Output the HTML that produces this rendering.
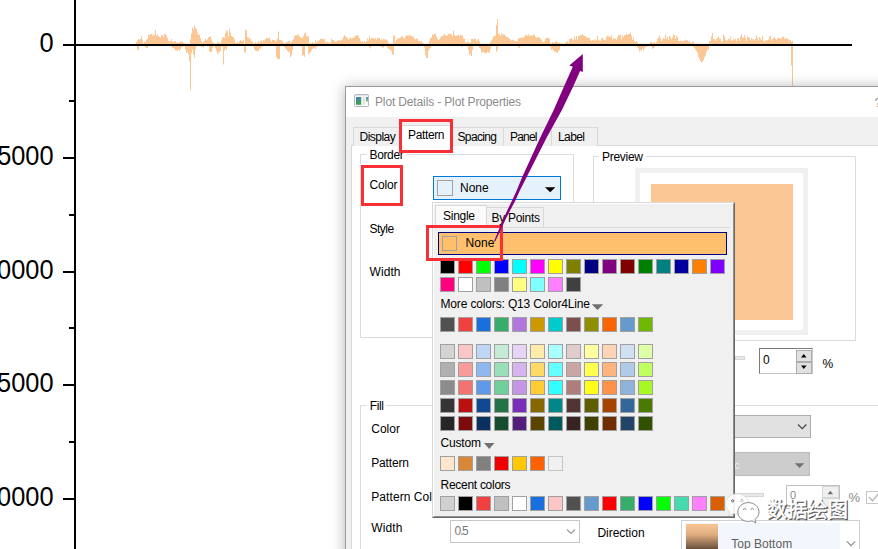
<!DOCTYPE html>
<html><head><meta charset="utf-8"><title>Plot Details - Plot Properties</title>
<style>
html,body{margin:0;padding:0;}
body{width:878px;height:549px;overflow:hidden;background:#fff;position:relative;font-family:"Liberation Sans","Noto Sans CJK SC",sans-serif;}
.b{position:absolute;box-sizing:border-box;}
.t{position:absolute;white-space:nowrap;line-height:1;}
.sw{position:absolute;box-sizing:border-box;width:15px;height:15px;border:1px solid #a0a0a0;}
svg{position:absolute;left:0;top:0;}
</style></head><body>

<svg width="878" height="549" viewBox="0 0 878 549">
<path d="M136.5 41.9V45.8M137.5 40.3V49.5M138.5 39.2V50.1M139.5 39.6V45.8M140.5 38.7V45.8M141.5 36.1V45.8M142.5 40.4V45.8M143.5 42.9V45.8M144.5 41.4V45.8M145.5 41.9V47.2M146.5 39.8V48.1M147.5 38.7V48.1M148.5 34.8V45.8M149.5 35.1V45.8M150.5 34.1V45.8M151.5 34.0V45.8M152.5 35.9V45.8M153.5 34.6V45.8M154.5 35.4V45.8M155.5 30.1V45.8M156.5 35.8V45.8M157.5 34.2V45.8M158.5 36.2V45.8M159.5 37.1V45.8M160.5 37.6V45.8M161.5 35.2V45.8M162.5 34.9V45.8M163.5 36.8V45.8M164.5 33.8V45.8M165.5 34.0V45.8M166.5 35.8V45.8M167.5 37.9V45.8M168.5 40.9V45.8M169.5 41.5V45.8M170.5 41.0V45.8M171.5 39.0V46.3M172.5 41.4V47.4M173.5 41.8V48.1M174.5 41.2V49.1M175.5 41.1V50.2M176.5 42.6V50.6M177.5 42.5V51.1M178.5 42.7V49.5M179.5 42.0V51.3M180.5 41.6V49.3M181.5 41.9V47.5M182.5 41.3V47.0M183.5 42.5V45.8M184.5 43.2V45.8M185.5 43.5V49.5M186.5 43.7V53.1M187.5 43.7V51.9M188.5 43.7V54.6M189.5 43.7V61.3M190.5 39.5V89.9M191.5 33.6V53.1M192.5 27.5V49.8M193.5 29.3V54.3M194.5 25.6V57.8M195.5 27.7V49.3M196.5 29.5V45.8M197.5 32.6V45.8M198.5 35.0V45.8M199.5 34.5V45.8M200.5 38.3V45.8M201.5 40.9V46.6M202.5 43.1V47.0M203.5 41.8V47.8M204.5 41.0V45.8M205.5 38.5V46.0M206.5 40.3V45.8M207.5 39.2V45.8M208.5 37.5V45.8M209.5 36.9V51.5M210.5 35.9V51.9M211.5 39.4V51.7M212.5 41.9V48.4M213.5 42.7V45.8M214.5 43.4V45.8M215.5 43.5V48.3M216.5 43.7V50.7M217.5 41.7V54.1M218.5 42.6V52.5M219.5 42.7V52.3M220.5 43.4V50.9M221.5 40.8V46.5M222.5 37.8V46.4M223.5 37.2V64.6M224.5 37.6V50.8M225.5 33.2V48.7M226.5 30.6V49.7M227.5 31.3V46.3M228.5 36.2V45.8M229.5 28.4V45.8M230.5 32.6V45.8M231.5 36.0V45.8M232.5 36.7V45.8M233.5 37.1V45.8M234.5 39.2V45.8M235.5 42.6V45.8M236.5 43.1V45.8M237.5 41.7V45.8M238.5 42.9V45.8M239.5 40.9V45.8M240.5 40.0V45.8M241.5 40.9V45.8M242.5 40.9V45.8M243.5 40.0V45.8M244.5 43.4V51.8M245.5 29.7V52.7M246.5 30.5V45.8M247.5 36.9V45.8M248.5 37.5V45.8M249.5 38.6V45.8M250.5 38.7V45.8M251.5 41.3V45.8M252.5 41.6V45.8M253.5 43.4V46.5M254.5 43.6V49.4M255.5 41.9V50.7M256.5 43.4V51.3M257.5 42.3V51.0M258.5 41.3V51.3M259.5 42.7V48.6M260.5 40.8V48.7M261.5 40.5V47.3M262.5 42.0V46.3M263.5 40.0V45.8M264.5 40.5V45.8M265.5 39.1V45.8M266.5 38.0V45.8M267.5 38.1V45.8M268.5 38.5V45.8M269.5 37.6V45.8M270.5 40.3V45.8M271.5 41.5V45.8M272.5 39.6V45.8M273.5 40.0V45.8M274.5 39.9V45.8M275.5 41.6V45.8M276.5 40.6V57.0M277.5 38.5V59.1M278.5 31.5V59.1M279.5 39.7V59.1M280.5 39.9V45.8M281.5 40.2V45.8M282.5 41.3V45.8M283.5 42.5V46.2M284.5 43.5V47.0M285.5 42.9V48.7M286.5 42.0V49.3M287.5 41.4V51.3M288.5 41.0V52.3M289.5 40.7V51.7M290.5 42.7V57.2M291.5 41.9V55.4M292.5 40.3V50.0M293.5 39.2V45.8M294.5 35.9V45.8M295.5 35.2V45.8M296.5 35.3V45.8M297.5 35.2V45.8M298.5 34.2V45.8M299.5 36.5V45.8M300.5 36.9V45.8M301.5 37.9V45.8M302.5 37.8V55.9M303.5 36.1V55.0M304.5 33.5V56.8M305.5 32.4V45.8M306.5 35.7V45.8M307.5 37.1V45.8M308.5 35.7V54.2M309.5 43.2V52.8M310.5 43.5V52.6M311.5 42.9V50.2M312.5 41.8V48.9M313.5 43.4V48.6M314.5 43.1V47.7M315.5 40.6V49.0M316.5 42.4V47.0M317.5 41.3V45.8M318.5 40.8V45.8M319.5 40.2V45.8M320.5 39.0V45.8M321.5 38.8V45.8M322.5 39.0V45.8M323.5 39.2V45.8M324.5 38.7V45.8M325.5 42.2V45.8M326.5 42.4V45.8M327.5 41.5V45.8M328.5 42.3V45.8M329.5 43.3V45.8M330.5 42.2V45.8M331.5 38.7V45.8M332.5 40.0V45.8M333.5 39.9V45.8M334.5 41.4V45.8M335.5 41.6V45.8M336.5 41.4V45.8M337.5 40.8V45.8M338.5 40.1V45.8M339.5 40.7V45.8M340.5 39.8V45.8M341.5 40.3V45.8M342.5 39.4V45.8M343.5 37.1V45.8M344.5 35.2V46.8M345.5 36.3V45.9M346.5 37.0V45.8M347.5 38.3V45.8M348.5 39.8V45.8M349.5 38.4V45.8M350.5 37.6V45.8M351.5 38.6V45.8M352.5 37.8V45.8M353.5 38.3V45.8M354.5 36.2V45.8M355.5 36.2V45.8M356.5 35.1V45.8M357.5 34.9V45.8M358.5 36.2V45.8M359.5 38.0V45.8M360.5 40.4V45.8M361.5 42.0V45.8M362.5 41.0V45.8M363.5 42.7V46.3M364.5 41.0V46.2M365.5 42.3V46.0M366.5 41.3V45.8M367.5 38.5V45.8M368.5 40.3V45.8M369.5 35.8V47.3M370.5 39.2V48.6M371.5 37.9V45.8M372.5 37.9V45.8M373.5 37.9V45.8M374.5 38.9V45.8M375.5 38.0V45.8M376.5 39.7V45.8M377.5 37.5V45.8M378.5 38.3V45.8M379.5 38.1V45.8M380.5 40.0V45.8M381.5 38.7V47.3M382.5 40.3V46.8M383.5 38.8V47.9M384.5 39.4V45.8M385.5 39.4V45.9M386.5 39.5V45.8M387.5 40.5V47.7M388.5 42.8V48.7M389.5 43.7V49.6M390.5 43.7V50.6M391.5 43.7V50.5M392.5 43.7V54.8M393.5 35.9V54.6M394.5 35.0V45.8M395.5 41.7V45.8M396.5 39.8V45.8M397.5 38.7V45.8M398.5 38.3V45.8M399.5 38.0V45.8M400.5 37.4V45.8M401.5 36.6V45.8M402.5 36.0V45.8M403.5 38.2V45.8M404.5 38.5V45.8M405.5 36.6V45.8M406.5 35.3V45.8M407.5 35.6V45.8M408.5 35.7V45.8M409.5 34.8V45.8M410.5 36.1V45.8M411.5 35.8V45.8M412.5 36.6V45.8M413.5 36.8V45.8M414.5 38.7V45.8M415.5 39.4V45.8M416.5 38.7V45.8M417.5 38.7V45.8M418.5 41.1V45.8M419.5 40.7V45.8M420.5 41.7V45.8M421.5 40.9V45.8M422.5 42.5V45.8M423.5 43.4V45.8M424.5 43.7V47.4M425.5 43.7V55.1M426.5 43.7V58.3M427.5 43.7V58.0M428.5 43.7V50.8M429.5 41.1V48.8M430.5 38.1V47.9M431.5 37.6V45.8M432.5 34.4V45.8M433.5 34.9V45.8M434.5 33.8V45.8M435.5 33.8V45.8M436.5 36.3V45.8M437.5 38.9V45.8M438.5 40.0V45.8M439.5 39.6V45.8M440.5 37.5V45.8M441.5 35.9V45.8M442.5 36.6V45.8M443.5 35.2V45.8M444.5 34.3V45.8M445.5 35.4V45.8M446.5 35.8V45.8M447.5 35.5V45.8M448.5 33.9V45.8M449.5 34.0V45.8M450.5 33.7V45.8M451.5 34.5V45.8M452.5 36.4V45.8M453.5 30.6V45.8M454.5 35.1V45.8M455.5 36.0V45.8M456.5 35.8V45.8M457.5 35.4V45.8M458.5 34.8V45.8M459.5 36.2V45.8M460.5 34.4V45.8M461.5 35.7V47.1M462.5 35.3V46.3M463.5 38.7V45.8M464.5 38.5V45.8M465.5 42.4V45.8M466.5 42.6V45.8M467.5 41.8V45.8M468.5 41.6V49.8M469.5 43.2V54.7M470.5 42.3V54.1M471.5 39.1V55.9M472.5 39.1V49.9M473.5 39.3V45.8M474.5 38.8V45.8M475.5 38.7V45.8M476.5 41.1V45.8M477.5 39.5V45.8M478.5 39.2V45.8M479.5 41.3V47.9M480.5 43.7V48.7M481.5 43.7V52.3M482.5 43.7V52.5M483.5 43.7V51.7M484.5 43.7V52.9M485.5 43.7V53.0M486.5 43.7V53.5M487.5 43.7V52.1M488.5 43.7V52.7M489.5 43.7V52.7M490.5 42.0V49.0M491.5 40.3V46.8M492.5 38.7V45.8M493.5 36.8V45.8M494.5 35.9V45.8M495.5 35.5V45.8M496.5 24.8V51.9M497.5 19.0V49.6M498.5 33.4V45.8M499.5 34.4V45.8M500.5 35.9V45.8M501.5 33.2V45.8M502.5 34.7V45.8M503.5 34.2V45.8M504.5 34.5V45.8M505.5 36.1V45.8M506.5 37.0V45.8M507.5 37.1V45.8M508.5 37.9V45.8M509.5 38.6V45.8M510.5 39.6V45.8M511.5 40.5V45.8M512.5 39.5V45.8M513.5 40.1V45.8M514.5 41.1V45.8M515.5 41.1V45.8M516.5 41.4V45.8M517.5 40.9V45.8M518.5 38.4V47.5M519.5 38.1V47.8M520.5 38.0V45.8M521.5 37.1V45.8M522.5 37.9V45.8M523.5 37.3V45.8M524.5 36.4V45.8M525.5 35.5V45.8M526.5 34.8V45.8M527.5 35.8V45.8M528.5 34.3V45.8M529.5 36.0V45.8M530.5 35.3V45.8M531.5 35.5V45.8M532.5 35.6V45.8M533.5 34.3V45.8M534.5 35.0V45.8M535.5 36.9V45.8M536.5 37.4V45.8M537.5 37.4V45.8M538.5 37.1V45.8M539.5 37.6V45.8M540.5 38.4V45.8M541.5 39.8V45.8M542.5 42.3V45.8M543.5 42.0V45.8M544.5 41.2V45.8M545.5 39.1V45.8M546.5 38.0V45.8M547.5 38.0V45.8M548.5 37.6V45.8M549.5 39.1V45.8M550.5 43.7V47.1M551.5 43.4V49.9M552.5 42.0V49.3M553.5 42.8V50.2M554.5 42.4V51.9M555.5 42.0V51.3M556.5 41.3V52.7M557.5 41.8V52.9M558.5 43.2V51.1M559.5 42.4V49.7M560.5 43.0V45.8M561.5 43.7V46.1M562.5 43.1V45.8M563.5 43.7V46.5M564.5 43.7V46.4M565.5 42.2V45.8M566.5 42.0V45.8M567.5 41.3V45.8M568.5 42.4V45.8M569.5 38.9V45.8M570.5 38.8V45.8M571.5 38.6V45.8M572.5 39.3V45.8M573.5 40.2V45.8M574.5 36.2V45.8M575.5 39.6V45.8M576.5 36.0V45.8M577.5 39.7V45.8M578.5 36.0V45.8M579.5 35.7V45.8M580.5 35.0V45.8M581.5 35.3V45.8M582.5 33.9V45.8M583.5 35.4V45.8M584.5 36.0V45.8M585.5 36.2V45.8M586.5 37.7V45.8M587.5 37.2V45.8M588.5 38.0V45.8M589.5 37.7V45.8M590.5 40.0V45.8M591.5 41.0V45.8M592.5 40.1V45.8M593.5 39.8V45.8M594.5 40.5V45.8M595.5 39.3V45.8M596.5 40.6V45.8M597.5 35.8V45.8M598.5 39.8V45.8M599.5 40.5V45.8M600.5 40.8V45.8M601.5 38.2V45.8M602.5 37.8V45.8M603.5 39.4V45.8M604.5 40.1V45.8M605.5 39.9V45.8M606.5 37.3V45.8M607.5 35.5V45.8M608.5 36.3V45.8M609.5 36.8V45.8M610.5 36.9V45.8M611.5 35.1V45.8M612.5 39.7V45.8M613.5 38.1V45.8M614.5 39.0V45.8M615.5 38.7V45.8M616.5 39.8V45.8M617.5 36.9V45.8M618.5 35.3V45.8M619.5 35.2V45.8M620.5 34.5V45.8M621.5 39.2V45.8M622.5 35.0V45.8M623.5 37.1V45.8M624.5 35.1V45.8M625.5 35.1V45.8M626.5 33.7V45.8M627.5 34.9V45.8M628.5 34.1V45.8M629.5 34.1V45.8M630.5 32.4V45.8M631.5 35.5V45.8M632.5 39.9V45.8M633.5 38.0V45.8M634.5 40.8V45.8M635.5 42.1V45.8M636.5 41.1V45.9M637.5 42.4V47.3M638.5 43.7V48.4M639.5 43.7V51.5M640.5 43.7V50.2M641.5 43.7V50.5M642.5 43.7V48.5M643.5 43.7V50.5M644.5 43.7V48.5M645.5 43.7V46.4M646.5 43.7V47.2M647.5 43.7V45.9M648.5 43.7V46.0M649.5 43.4V45.8M650.5 41.9V45.8M651.5 41.6V46.3M652.5 42.9V49.1M653.5 42.6V47.9M654.5 41.7V47.2M655.5 43.5V45.8M656.5 41.8V45.8M657.5 38.9V45.8M658.5 37.9V45.8M659.5 35.1V45.8M660.5 38.0V45.8M661.5 40.9V45.8M662.5 39.6V45.8M663.5 38.1V45.8M664.5 39.0V45.8M665.5 34.4V45.8M666.5 38.9V45.8M667.5 37.1V45.8M668.5 40.1V45.8M669.5 35.8V45.8M670.5 37.2V45.8M671.5 39.2V45.8M672.5 37.6V45.8M673.5 34.5V45.8M674.5 35.2V45.8M675.5 38.8V45.8M676.5 35.6V45.8M677.5 36.9V45.8M678.5 40.7V45.8M679.5 41.0V45.8M680.5 40.7V45.8M681.5 40.7V45.8M682.5 41.3V45.8M683.5 41.0V45.8M684.5 40.6V45.8M685.5 39.6V45.8M686.5 40.4V45.8M687.5 40.1V45.8M688.5 41.2V45.8M689.5 41.6V45.8M690.5 42.3V45.8M691.5 43.2V45.8M692.5 41.6V45.9M693.5 41.7V46.7M694.5 43.7V48.3M695.5 43.7V49.5M696.5 43.7V50.8M697.5 43.7V52.8M698.5 43.7V56.9M699.5 43.7V58.9M700.5 43.7V61.3M701.5 43.7V62.5M702.5 43.7V61.6M703.5 43.7V60.2M704.5 43.7V57.6M705.5 43.7V55.5M706.5 43.7V51.7M707.5 43.7V50.1M708.5 43.7V49.6M709.5 41.0V46.1M710.5 41.0V45.8M711.5 36.4V45.8M712.5 33.1V45.8M713.5 38.9V45.8M714.5 39.0V45.8M715.5 40.8V45.8M716.5 39.1V45.8M717.5 37.8V45.8M718.5 36.2V45.8M719.5 38.6V45.8M720.5 39.1V45.8M721.5 41.6V45.8M722.5 41.3V45.8M723.5 34.0V45.8M724.5 36.5V45.8M725.5 39.6V45.8M726.5 40.5V45.8M727.5 40.2V45.8M728.5 38.8V45.8M729.5 39.3V45.8M730.5 36.6V45.8M731.5 40.8V45.8M732.5 40.3V45.8M733.5 38.6V45.8M734.5 39.9V45.8M735.5 38.4V45.8M736.5 41.3V45.8M737.5 38.8V45.8M738.5 38.0V45.8M739.5 40.8V45.8M740.5 36.6V45.8M741.5 34.6V45.8M742.5 38.1V45.8M743.5 37.3V45.8M744.5 35.0V45.8M745.5 38.1V45.8M746.5 40.7V45.8M747.5 35.8V45.8M748.5 37.4V45.8M749.5 37.6V45.8M750.5 40.1V45.8M751.5 38.3V45.8M752.5 39.3V45.8M753.5 39.3V45.8M754.5 40.2V45.8M755.5 39.0V45.8M756.5 35.6V45.8M757.5 37.9V45.8M758.5 40.4V45.8M759.5 36.9V45.8M760.5 38.6V45.8M761.5 40.1V45.8M762.5 35.8V45.8M763.5 40.7V45.8M764.5 41.5V45.8M765.5 40.5V45.8M766.5 40.1V45.8M767.5 40.3V45.8M768.5 39.4V45.8M769.5 36.7V45.8M770.5 35.7V45.8M771.5 40.4V45.8M772.5 39.1V45.8M773.5 38.0V45.8M774.5 37.2V45.8M775.5 38.7V45.8M776.5 39.8V45.8M777.5 38.5V45.8M778.5 37.9V45.8M779.5 37.8V45.8M780.5 39.0V45.8M781.5 38.2V45.8M782.5 36.8V45.8M783.5 36.9V45.8M784.5 38.9V45.8M785.5 37.4V45.8M786.5 38.8V45.8M787.5 38.4V45.8M788.5 39.3V45.8M789.5 40.4V45.8M790.5 40.1V45.8M791.5 41.8V65.8M792.5 40.7V87.8M793.5 43.7V45.8" stroke="#fbc795" stroke-width="1.02" fill="none"/>
<g fill="#000">
<rect x="74" y="0" width="2" height="549"/>
<rect x="63" y="44" width="789" height="2"/>
<rect x="63" y="157" width="12" height="2"/>
<rect x="63" y="271" width="12" height="2"/>
<rect x="63" y="384" width="12" height="2"/>
<rect x="63" y="498" width="12" height="2"/>
<rect x="69" y="100" width="6" height="2"/>
<rect x="69" y="214" width="6" height="2"/>
<rect x="69" y="327" width="6" height="2"/>
<rect x="69" y="441" width="6" height="2"/>
</g></svg>
<span class="t" style="right:824.4px;top:29.50px;font-size:25.4px;color:#000;transform:scaleY(1.07);transform-origin:100% 0;">0</span>
<span class="t" style="right:824.4px;top:142.50px;font-size:25.4px;color:#000;transform:scaleY(1.07);transform-origin:100% 0;">5000</span>
<span class="t" style="right:824.4px;top:256.50px;font-size:25.4px;color:#000;transform:scaleY(1.07);transform-origin:100% 0;">10000</span>
<span class="t" style="right:824.4px;top:369.50px;font-size:25.4px;color:#000;transform:scaleY(1.07);transform-origin:100% 0;">15000</span>
<span class="t" style="right:824.4px;top:483.50px;font-size:25.4px;color:#000;transform:scaleY(1.07);transform-origin:100% 0;">20000</span>
<div class="b" style="left:345px;top:86px;width:560px;height:500px;background:#f0f0f0;border:1px solid #9a9a9a;box-shadow:0 1px 13px 0px rgba(0,0,0,0.30);"></div>
<div class="b" style="left:346px;top:87px;width:540px;height:30px;background:#fff;"></div>
<svg width="878" height="549" viewBox="0 0 878 549"><defs><linearGradient id="ig" x1="0" y1="0" x2="0.4" y2="1"><stop offset="0" stop-color="#4f7fc0"/><stop offset="0.45" stop-color="#3f8f88"/><stop offset="1" stop-color="#3fa04a"/></linearGradient><linearGradient id="ig2" x1="0" y1="0" x2="0" y2="1"><stop offset="0" stop-color="#5a8acb"/><stop offset="1" stop-color="#7fc070"/></linearGradient></defs><rect x="354.500" y="94.500" width="14" height="12" rx="0.8" fill="#fbfbfb" stroke="#b4b8c0" stroke-width="1"/><rect x="355" y="95" width="13" height="1.2" fill="#dfe3ea"/><rect x="356" y="97" width="5.2" height="7.8" fill="url(#ig)"/><rect x="362.800" y="97" width="2.100" height="7.8" fill="#e2e2e2"/><rect x="366" y="97" width="2" height="4.500" fill="url(#ig2)"/></svg>
<span class="t" style="left:375px;top:96.04px;font-size:12px;color:#8c8c8c;letter-spacing:-0.140px;">Plot Details - Plot Properties</span>
<span class="t" style="left:874.6px;top:95.70px;font-size:13px;color:#8c8c8c;">?</span>
<div class="b" style="left:351px;top:145px;width:540px;height:420px;background:#fff;border:1px solid #d9d9d9;"></div>
<div class="b" style="left:353px;top:127px;width:47px;height:19px;background:#f0f0f0;border:1px solid #d9d9d9;border-bottom:none;"></div>
<span class="t" style="left:359.6px;top:131.24px;font-size:12px;color:#000;letter-spacing:-0.541px;">Display</span>
<div class="b" style="left:452px;top:127px;width:53px;height:19px;background:#f0f0f0;border:1px solid #d9d9d9;border-bottom:none;"></div>
<span class="t" style="left:457.5px;top:131.24px;font-size:12px;color:#000;letter-spacing:-0.644px;">Spacing</span>
<div class="b" style="left:503px;top:127px;width:50px;height:19px;background:#f0f0f0;border:1px solid #d9d9d9;border-bottom:none;"></div>
<span class="t" style="left:510px;top:131.24px;font-size:12px;color:#000;letter-spacing:-0.798px;">Panel</span>
<div class="b" style="left:551px;top:127px;width:47px;height:19px;background:#f0f0f0;border:1px solid #d9d9d9;border-bottom:none;"></div>
<span class="t" style="left:558px;top:131.24px;font-size:12px;color:#000;letter-spacing:-0.591px;">Label</span>
<div class="b" style="left:399px;top:125px;width:54px;height:21.5px;background:#fff;border:1px solid #d9d9d9;border-bottom:none;"></div>
<span class="t" style="left:408px;top:129.24px;font-size:12px;color:#000;letter-spacing:-0.365px;">Pattern</span>
<div class="b" style="left:360px;top:154px;width:214px;height:184px;border:1px solid #dcdcdc;"></div>
<div class="b" style="left:367px;top:150px;width:39px;height:10px;background:#fff;"></div>
<span class="t" style="left:369.5px;top:149.24px;font-size:12px;color:#000;letter-spacing:-0.364px;">Border</span>
<span class="t" style="left:369.5px;top:179.24px;font-size:12px;color:#000;letter-spacing:-0.169px;">Color</span>
<span class="t" style="left:369.5px;top:222.94px;font-size:12px;color:#000;letter-spacing:-0.495px;">Style</span>
<span class="t" style="left:369.5px;top:265.94px;font-size:12px;color:#000;letter-spacing:0.081px;">Width</span>
<div class="b" style="left:433px;top:176px;width:128px;height:23.5px;background:#e5f1fb;border:1px solid #0078d7;"></div>
<div class="b" style="left:437px;top:180px;width:16px;height:16px;background:#e5f1fb;border:1px solid #a0a0a0;"></div>
<span class="t" style="left:460px;top:182.14px;font-size:12px;color:#000;letter-spacing:0.004px;">None</span>
<svg width="878" height="549" viewBox="0 0 878 549"><path d="M545 187.2H555.4L550.2 192.2Z" fill="#000"/></svg>
<div class="b" style="left:593px;top:156px;width:263px;height:185px;border:1px solid #dcdcdc;"></div>
<div class="b" style="left:599px;top:151px;width:47px;height:10px;background:#fff;"></div>
<span class="t" style="left:602px;top:150.84px;font-size:12px;color:#000;letter-spacing:-0.280px;">Preview</span>
<div class="b" style="left:635px;top:168px;width:173px;height:167px;background:#f0f0f0;"></div>
<div class="b" style="left:640px;top:173px;width:163px;height:157px;background:#fff;"></div>
<div class="b" style="left:651px;top:183.5px;width:142px;height:136.5px;background:#fbc795;"></div>
<div class="b" style="left:735px;top:356.3px;width:10px;height:4px;background:#e7eaea;border:1px solid #d6d6d6;"></div>
<div class="b" style="left:759px;top:348px;width:54px;height:26px;background:#fff;border:1px solid #7a7a7a;border-right-color:#c8c8c8;border-bottom-color:#c8c8c8;"></div>
<div class="b" style="left:795.5px;top:349.5px;width:16.5px;height:12px;background:#e1e1e1;border:1px solid #adadad;"></div>
<div class="b" style="left:795.5px;top:361.5px;width:16.5px;height:12px;background:#e1e1e1;border:1px solid #adadad;"></div>
<svg width="878" height="549" viewBox="0 0 878 549"><path d="M801 357.5L803.8 354L806.6 357.5Z M801 365.5L803.8 369L806.6 365.5Z" fill="#000"/></svg>
<span class="t" style="left:763px;top:353.54px;font-size:12px;color:#000;">0</span>
<span class="t" style="left:822.6px;top:357.54px;font-size:12px;color:#000;">%</span>
<div class="b" style="left:360px;top:405px;width:560px;height:200px;border:1px solid #dcdcdc;"></div>
<div class="b" style="left:367px;top:400px;width:19px;height:10px;background:#fff;"></div>
<span class="t" style="left:369.8px;top:400.24px;font-size:12px;color:#000;letter-spacing:-0.376px;">Fill</span>
<span class="t" style="left:371.3px;top:423.04px;font-size:12px;color:#000;letter-spacing:-0.019px;">Color</span>
<span class="t" style="left:371.3px;top:457.24px;font-size:12px;color:#000;letter-spacing:-0.182px;">Pattern</span>
<span class="t" style="left:371.3px;top:491.04px;font-size:12px;color:#000;letter-spacing:0.067px;">Pattern Color</span>
<span class="t" style="left:371.3px;top:522.34px;font-size:12px;color:#000;letter-spacing:0.131px;">Width</span>
<div class="b" style="left:600px;top:415px;width:210.5px;height:22.5px;background:#e1e1e1;border:1px solid #adadad;"></div>
<svg width="878" height="549" viewBox="0 0 878 549"><path d="M798 424.5L802.2 428.7L806.4 424.5" fill="none" stroke="#444" stroke-width="1.2"/></svg>
<div class="b" style="left:600px;top:452px;width:209.5px;height:24px;background:#cccccc;border:1px solid #bcbcbc;"></div>
<svg width="878" height="549" viewBox="0 0 878 549"><path d="M794.8 463.2H804.2L799.5 468Z" fill="#707070"/></svg>
<span class="t" style="left:734px;top:459.89px;font-size:11px;color:#f0f0f0;">c</span>
<div class="b" style="left:735px;top:493px;width:29px;height:4px;background:#e7eaea;border:1px solid #d6d6d6;"></div>
<div class="b" style="left:786px;top:485px;width:53.5px;height:24px;background:#fff;border:1px solid #c0c0c0;"></div>
<div class="b" style="left:822px;top:486px;width:17px;height:12px;background:#efefef;border:1px solid #d8d8d8;"></div>
<div class="b" style="left:822px;top:498px;width:17px;height:10px;background:#efefef;border:1px solid #d8d8d8;"></div>
<svg width="878" height="549" viewBox="0 0 878 549"><path d="M827.5 494.2L830.3 490.8L833.1 494.2Z" fill="#707070"/></svg>
<span class="t" style="left:790px;top:489.89px;font-size:11px;color:#8a8a8a;">0</span>
<span class="t" style="left:848.5px;top:491.20px;font-size:13px;color:#8a8a8a;">%</span>
<div class="b" style="left:866px;top:491px;width:14px;height:13px;background:#fff;border:1px solid #c8c8c8;"></div>
<svg width="878" height="549" viewBox="0 0 878 549"><path d="M869 497L872.5 501L879 493" fill="none" stroke="#b8b8b8" stroke-width="1.4"/></svg>
<div class="b" style="left:450px;top:520px;width:129.5px;height:23px;background:#fff;border:1px solid #c6c6c6;"></div>
<span class="t" style="left:454.6px;top:524.94px;font-size:12px;color:#7a7a7a;letter-spacing:-1.241px;">0.5</span>
<svg width="878" height="549" viewBox="0 0 878 549"><path d="M567 529.5L571 533.5L575 529.5" fill="none" stroke="#9a9a9a" stroke-width="1.1"/></svg>
<span class="t" style="left:597.4px;top:527.44px;font-size:12px;color:#000;letter-spacing:-0.019px;">Direction</span>
<div class="b" style="left:681px;top:520px;width:179px;height:40px;background:#fff;border:1px solid #d0d0d0;"></div>
<div class="b" style="left:685px;top:523px;width:154.5px;height:30px;background:#f3f6fc;"></div>
<div class="b" style="left:686px;top:524px;width:32px;height:30px;background:linear-gradient(#fac595 0%,#e0ad80 35%,#8a6a50 70%,#3a2c22 100%);"></div>
<span class="t" style="left:731.2px;top:537.54px;font-size:12px;color:#606060;letter-spacing:0.034px;">Top Bottom</span>
<svg width="878" height="549" viewBox="0 0 878 549"><path d="M846.8 541.3L851 545.6L855.2 541.3" fill="none" stroke="#8a8a8a" stroke-width="1.1"/></svg>
<div class="b" style="left:432px;top:202px;width:303px;height:316px;background:#f0f0f0;border:1px solid #d8d8d8;border-right:1px solid #696969;border-bottom:1px solid #696969;"></div>
<div class="b" style="left:433px;top:203px;width:301px;height:314px;border:1px solid #fff;border-right:1px solid #909090;border-bottom:1px solid #909090;"></div>
<div class="b" style="left:486px;top:207px;width:58px;height:20px;background:#f0f0f0;border:1px solid #d9d9d9;border-bottom:none;"></div>
<div class="b" style="left:435px;top:227px;width:295px;height:1px;background:#d9d9d9;"></div>
<div class="b" style="left:435px;top:204.5px;width:52px;height:23px;background:#fafafa;border:1px solid #d9d9d9;border-bottom:none;"></div>
<span class="t" style="left:443px;top:210.04px;font-size:12px;color:#000;letter-spacing:-0.272px;">Single</span>
<span class="t" style="left:491.4px;top:212.44px;font-size:12px;color:#000;letter-spacing:-0.261px;">By Points</span>
<div class="b" style="left:438px;top:232px;width:289px;height:23px;background:#ffc06e;border:1px solid #000080;"></div>
<div class="b" style="left:442px;top:236px;width:15px;height:15px;background:#ffc06e;border:1px solid #a0a0a0;"></div>
<span class="t" style="left:465.5px;top:237.24px;font-size:12px;color:#000;letter-spacing:0.104px;">None</span>
<div class="sw" style="left:440px;top:259px;background:#000000;"></div>
<div class="sw" style="left:458px;top:259px;background:#ff0000;"></div>
<div class="sw" style="left:476px;top:259px;background:#00ff00;"></div>
<div class="sw" style="left:494px;top:259px;background:#0000ff;"></div>
<div class="sw" style="left:512px;top:259px;background:#00ffff;"></div>
<div class="sw" style="left:530px;top:259px;background:#ff00ff;"></div>
<div class="sw" style="left:548px;top:259px;background:#ffff00;"></div>
<div class="sw" style="left:566px;top:259px;background:#808000;"></div>
<div class="sw" style="left:584px;top:259px;background:#000080;"></div>
<div class="sw" style="left:602px;top:259px;background:#800080;"></div>
<div class="sw" style="left:620px;top:259px;background:#800000;"></div>
<div class="sw" style="left:638px;top:259px;background:#008000;"></div>
<div class="sw" style="left:656px;top:259px;background:#008080;"></div>
<div class="sw" style="left:674px;top:259px;background:#0000a0;"></div>
<div class="sw" style="left:692px;top:259px;background:#ff8000;"></div>
<div class="sw" style="left:710px;top:259px;background:#8000ff;"></div>
<div class="sw" style="left:440px;top:277px;background:#ff0080;"></div>
<div class="sw" style="left:458px;top:277px;background:#ffffff;"></div>
<div class="sw" style="left:476px;top:277px;background:#c0c0c0;"></div>
<div class="sw" style="left:494px;top:277px;background:#808080;"></div>
<div class="sw" style="left:512px;top:277px;background:#ffff80;"></div>
<div class="sw" style="left:530px;top:277px;background:#80ffff;"></div>
<div class="sw" style="left:548px;top:277px;background:#ff80ff;"></div>
<div class="sw" style="left:566px;top:277px;background:#404040;"></div>
<span class="t" style="left:440.5px;top:297.84px;font-size:12px;color:#000;letter-spacing:-0.150px;">More colors: Q13 Color4Line</span>
<svg width="878" height="549" viewBox="0 0 878 549"><path d="M591.8 304.2H603.2L597.5 310Z M484 443H494.5L489.2 449Z" fill="#707070"/></svg>
<div class="sw" style="left:440px;top:317px;background:#515151;"></div>
<div class="sw" style="left:458px;top:317px;background:#f14040;"></div>
<div class="sw" style="left:476px;top:317px;background:#1a6fdf;"></div>
<div class="sw" style="left:494px;top:317px;background:#37ad6b;"></div>
<div class="sw" style="left:512px;top:317px;background:#b177de;"></div>
<div class="sw" style="left:530px;top:317px;background:#cc9900;"></div>
<div class="sw" style="left:548px;top:317px;background:#00cbcc;"></div>
<div class="sw" style="left:566px;top:317px;background:#7d4e4e;"></div>
<div class="sw" style="left:584px;top:317px;background:#8e8e00;"></div>
<div class="sw" style="left:602px;top:317px;background:#fb6501;"></div>
<div class="sw" style="left:620px;top:317px;background:#6699cc;"></div>
<div class="sw" style="left:638px;top:317px;background:#6fb802;"></div>
<div class="sw" style="left:440px;top:344px;background:#d3d3d3;"></div>
<div class="sw" style="left:458px;top:344px;background:#fbc6c6;"></div>
<div class="sw" style="left:476px;top:344px;background:#bfd7f7;"></div>
<div class="sw" style="left:494px;top:344px;background:#c4ebd5;"></div>
<div class="sw" style="left:512px;top:344px;background:#e6d3f5;"></div>
<div class="sw" style="left:530px;top:344px;background:#ffebaa;"></div>
<div class="sw" style="left:548px;top:344px;background:#aaffff;"></div>
<div class="sw" style="left:566px;top:344px;background:#e0cccc;"></div>
<div class="sw" style="left:584px;top:344px;background:#ffffa0;"></div>
<div class="sw" style="left:602px;top:344px;background:#ffd3b6;"></div>
<div class="sw" style="left:620px;top:344px;background:#d1e0f0;"></div>
<div class="sw" style="left:638px;top:344px;background:#dcffa8;"></div>
<div class="sw" style="left:440px;top:362px;background:#b0b0b0;"></div>
<div class="sw" style="left:458px;top:362px;background:#f79b9b;"></div>
<div class="sw" style="left:476px;top:362px;background:#8fb8f0;"></div>
<div class="sw" style="left:494px;top:362px;background:#9adfb9;"></div>
<div class="sw" style="left:512px;top:362px;background:#d6b4ee;"></div>
<div class="sw" style="left:530px;top:362px;background:#ffd966;"></div>
<div class="sw" style="left:548px;top:362px;background:#66ffff;"></div>
<div class="sw" style="left:566px;top:362px;background:#c9a5a5;"></div>
<div class="sw" style="left:584px;top:362px;background:#ffff50;"></div>
<div class="sw" style="left:602px;top:362px;background:#ffb37f;"></div>
<div class="sw" style="left:620px;top:362px;background:#b0cbe5;"></div>
<div class="sw" style="left:638px;top:362px;background:#c0ff60;"></div>
<div class="sw" style="left:440px;top:380px;background:#8c8c8c;"></div>
<div class="sw" style="left:458px;top:380px;background:#f37373;"></div>
<div class="sw" style="left:476px;top:380px;background:#5e99ea;"></div>
<div class="sw" style="left:494px;top:380px;background:#6fd09b;"></div>
<div class="sw" style="left:512px;top:380px;background:#c596e7;"></div>
<div class="sw" style="left:530px;top:380px;background:#ffcc33;"></div>
<div class="sw" style="left:548px;top:380px;background:#33ffff;"></div>
<div class="sw" style="left:566px;top:380px;background:#b07d7d;"></div>
<div class="sw" style="left:584px;top:380px;background:#ffff19;"></div>
<div class="sw" style="left:602px;top:380px;background:#fe9249;"></div>
<div class="sw" style="left:620px;top:380px;background:#8fb3d9;"></div>
<div class="sw" style="left:638px;top:380px;background:#a8f826;"></div>
<div class="sw" style="left:440px;top:398px;background:#353535;"></div>
<div class="sw" style="left:458px;top:398px;background:#bc1010;"></div>
<div class="sw" style="left:476px;top:398px;background:#114893;"></div>
<div class="sw" style="left:494px;top:398px;background:#247347;"></div>
<div class="sw" style="left:512px;top:398px;background:#7b2cb9;"></div>
<div class="sw" style="left:530px;top:398px;background:#886600;"></div>
<div class="sw" style="left:548px;top:398px;background:#008788;"></div>
<div class="sw" style="left:566px;top:398px;background:#533434;"></div>
<div class="sw" style="left:584px;top:398px;background:#5e5e00;"></div>
<div class="sw" style="left:602px;top:398px;background:#a74301;"></div>
<div class="sw" style="left:620px;top:398px;background:#336699;"></div>
<div class="sw" style="left:638px;top:398px;background:#4a7a01;"></div>
<div class="sw" style="left:440px;top:416px;background:#262626;"></div>
<div class="sw" style="left:458px;top:416px;background:#7d0b0b;"></div>
<div class="sw" style="left:476px;top:416px;background:#0c3062;"></div>
<div class="sw" style="left:494px;top:416px;background:#184c2f;"></div>
<div class="sw" style="left:512px;top:416px;background:#521d7b;"></div>
<div class="sw" style="left:530px;top:416px;background:#5b4400;"></div>
<div class="sw" style="left:548px;top:416px;background:#005a5b;"></div>
<div class="sw" style="left:566px;top:416px;background:#382323;"></div>
<div class="sw" style="left:584px;top:416px;background:#3f3f00;"></div>
<div class="sw" style="left:602px;top:416px;background:#6f2d01;"></div>
<div class="sw" style="left:620px;top:416px;background:#224466;"></div>
<div class="sw" style="left:638px;top:416px;background:#315101;"></div>
<span class="t" style="left:440.5px;top:437.04px;font-size:12px;color:#000;letter-spacing:-0.169px;">Custom</span>
<div class="sw" style="left:440px;top:456px;background:#ffe6cc;"></div>
<div class="sw" style="left:458px;top:456px;background:#d98636;"></div>
<div class="sw" style="left:476px;top:456px;background:#808080;"></div>
<div class="sw" style="left:494px;top:456px;background:#f00000;"></div>
<div class="sw" style="left:512px;top:456px;background:#ffc800;"></div>
<div class="sw" style="left:530px;top:456px;background:#ff6000;"></div>
<div class="sw" style="left:548px;top:456px;background:#f0f0f0;border-color:#c4c4c4;"></div>
<span class="t" style="left:440.5px;top:478.54px;font-size:12px;color:#000;letter-spacing:-0.281px;">Recent colors</span>
<div class="sw" style="left:440px;top:496px;background:#d0d0d0;"></div>
<div class="sw" style="left:458px;top:496px;background:#000000;"></div>
<div class="sw" style="left:476px;top:496px;background:#f14040;"></div>
<div class="sw" style="left:494px;top:496px;background:#c0c0c0;"></div>
<div class="sw" style="left:512px;top:496px;background:#ffffff;"></div>
<div class="sw" style="left:530px;top:496px;background:#1a6fdf;"></div>
<div class="sw" style="left:548px;top:496px;background:#fbc6c6;"></div>
<div class="sw" style="left:566px;top:496px;background:#515151;"></div>
<div class="sw" style="left:584px;top:496px;background:#6699cc;"></div>
<div class="sw" style="left:602px;top:496px;background:#ff0000;"></div>
<div class="sw" style="left:620px;top:496px;background:#37ad6b;"></div>
<div class="sw" style="left:638px;top:496px;background:#0000ff;"></div>
<div class="sw" style="left:656px;top:496px;background:#00ff00;"></div>
<div class="sw" style="left:674px;top:496px;background:#46dbaf;"></div>
<div class="sw" style="left:692px;top:496px;background:#ff80ff;"></div>
<div class="sw" style="left:710px;top:496px;background:#d95f02;"></div>
<div class="b" style="left:399px;top:119px;width:54px;height:34px;border:3px solid #f83035;"></div>
<div class="b" style="left:361px;top:165px;width:42px;height:41px;border:3px solid #f83035;"></div>
<div class="b" style="left:426px;top:225px;width:77px;height:36px;border:3px solid #f83035;"></div>
<svg width="878" height="549" viewBox="0 0 878 549"><path d="M494 241.3L503.7 218L512.3 200L516.9 190L522.1 177.2L540.3 137.4L553.7 110L564 86.4L572.8 66.8L569.3 65.5L582.8 54.1L582.8 71.9L580.1 70.9L573.2 86.4L561.9 110L546.7 137.4L526.6 177.2L520.1 190L515.6 200L506.2 218L495.2 241.6Z" fill="#800080"/></svg>
<svg width="878" height="549" viewBox="0 0 878 549"><path d="M737.2 493.8c-6.5 0-11.6 4.5-11.6 10.2c0 3.2 1.6 6 4.2 7.9l-1.2 3.8l4.3-2.3c1.4 0.5 2.8 0.8 4.3 0.8c6.5 0 11.6-4.6 11.6-10.2s-5.1-10.2-11.6-10.2z" fill="#fff" fill-opacity="0.9" stroke="#d4d4d4" stroke-width="0.7"/><path d="M748.4 502.6c-5.9 0-10.6 4.2-10.6 9.4s4.700 9.400 10.600 9.400c1.300 0 2.500-0.200 3.700-0.600l3.800 2.200l-1-3.500c2.500-1.700 4.100-4.400 4.100-7.500c0-5.200-4.700-9.400-10.600-9.400z" fill="#fff" stroke="#6c6c6c" stroke-width="0.8"/><g fill="none" stroke="#707070" stroke-width="0.8"><circle cx="732.6" cy="500.800" r="1.1" stroke="#444"/><circle cx="741.8" cy="500.600" r="1.2" stroke="#b0b0b0"/><path d="M743.4 509.8a1.3 1.3 0 0 1 2.600 0M751 509.8a1.3 1.3 0 0 1 2.600 0"/></g><text x="767.8" y="518.4" font-size="20.3" fill="#555" stroke="#555" stroke-width="0.9" font-family="'Liberation Sans','Noto Sans CJK SC',sans-serif">数据绘图</text><text x="766.8" y="517.4" font-size="20.3" fill="#fff" stroke="#fff" stroke-width="0.5" font-family="'Liberation Sans','Noto Sans CJK SC',sans-serif">数据绘图</text></svg>
</body></html>
